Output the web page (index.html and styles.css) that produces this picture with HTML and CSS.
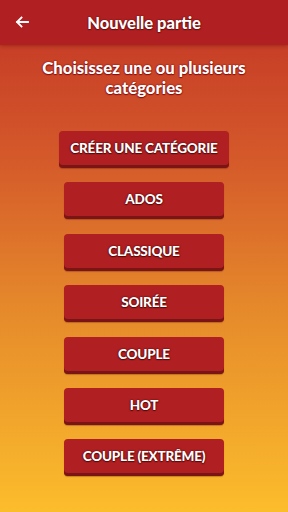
FILE: index.html
```html
<!DOCTYPE html>
<html lang="fr">
<head>
  <meta charset="UTF-8">
  <title>Nouvelle partie</title>
  <link rel="stylesheet" href="styles.css">
</head>
<body>
  <header class="app-bar">
    <button class="back" aria-label="Retour">
      <svg width="14" height="12" viewBox="0 0 14 12">
        <path d="M13 6H2M6.5 1.5L2 6l4.5 4.5" fill="none" stroke="#fff" stroke-width="1.8" stroke-linecap="square"/>
      </svg>
    </button>
    <h1>Nouvelle partie</h1>
  </header>

  <main class="content">
    <h2>Choisissez une ou plusieurs catégories</h2>

    <div class="categories">
      <button class="cat wide">CRÉER UNE CATÉGORIE</button>
      <button class="cat">ADOS</button>
      <button class="cat">CLASSIQUE</button>
      <button class="cat">SOIRÉE</button>
      <button class="cat">COUPLE</button>
      <button class="cat">HOT</button>
      <button class="cat">COUPLE (EXTRÊME)</button>
    </div>
  </main>
</body>
</html>
```

FILE: styles.css
```css
html, body { height: 100%; }
body {
  margin: 0;
  font-family: Lato, "Open Sans", sans-serif;
  background: linear-gradient(180deg, #c23526 0%, #d4582a 30%, #e5892b 60%, #fcbd2c 100%);
  color: #fff;
  overflow: hidden;
}
.app-bar {
  position: relative;
  height: 45px;
  background: #b02022;
  display: flex;
  align-items: center;
  justify-content: center;
  box-shadow: 0 1px 4px rgba(80, 0, 0, 0.35);
}
.back {
  position: absolute;
  left: 15px;
  top: 16px;
  padding: 0;
  border: none;
  background: none;
}
.app-bar h1 {
  margin: 0;
  font-size: 16.5px;
  font-weight: 900;
  text-shadow: 0 0 1px #6d0d0d, 0 0 2px #6d0d0d, 0 1px 1px #6d0d0d;
}
.content { padding: 13px 16px 0; }
.content h2 {
  margin: 0;
  text-align: center;
  font-size: 16.7px;
  line-height: 20px;
  font-weight: 900;
  text-shadow: 0 0 1px #8a0d0d, 0 0 2px #8a0d0d, 0 1px 1px #8a0d0d;
}
.categories {
  display: flex;
  flex-direction: column;
  align-items: center;
  gap: 14.4px;
  margin-top: 33px;
}
.cat {
  width: 160px;
  height: 37px;
  padding: 0 0 3px;
  border: none;
  border-radius: 4px;
  background: #b01f22;
  box-shadow: inset 0 -3px 0 #7a1515, 0 1px 1px rgba(90, 20, 0, 0.3);
  color: #fff;
  font-family: Lato, sans-serif;
  font-size: 13.5px;
  font-weight: 900;
  letter-spacing: -0.2px;
  text-shadow: 0 0 1px #5a0a0a, 0 0 2px #5a0a0a, 0 1px 1px #5a0a0a;
}
.cat.wide { width: 170px; }
```
